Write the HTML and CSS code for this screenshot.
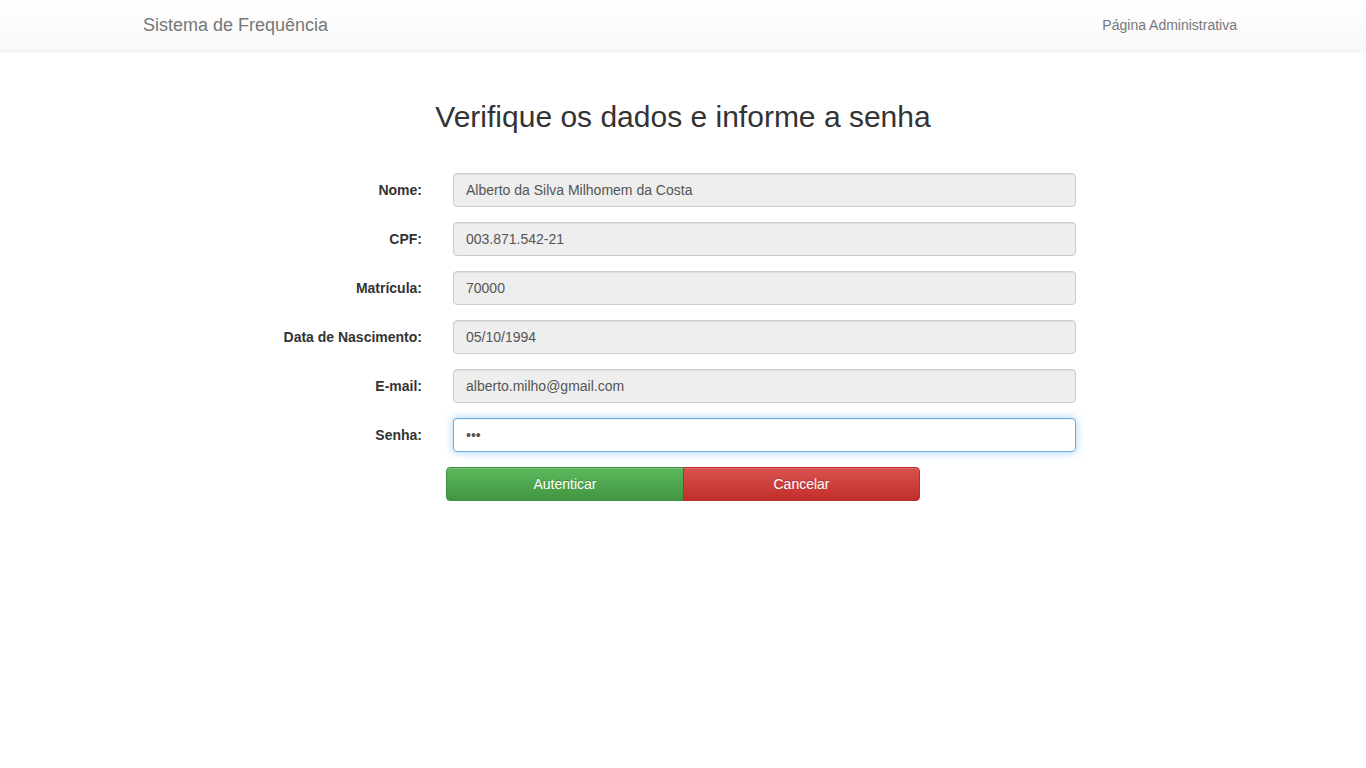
FILE: index.html
```html
<!DOCTYPE html>
<html lang="pt-BR">
<head>
<meta charset="utf-8">
<title>Sistema de Frequência</title>
<link rel="stylesheet" href="styles.css">
</head>
<body>
<nav class="navbar">
  <div class="navbar-inner">
    <a class="brand" href="#">Sistema de Frequência</a>
    <a class="nav-link" href="#">Página Administrativa</a>
  </div>
</nav>
<main class="main">
  <h2 class="title">Verifique os dados e informe a senha</h2>
  <form class="form">
    <label class="label">Nome:</label>
    <input class="input" type="text" value="Alberto da Silva Milhomem da Costa" readonly>
    <label class="label">CPF:</label>
    <input class="input" type="text" value="003.871.542-21" readonly>
    <label class="label">Matrícula:</label>
    <input class="input" type="text" value="70000" readonly>
    <label class="label">Data de Nascimento:</label>
    <input class="input" type="text" value="05/10/1994" readonly>
    <label class="label">E-mail:</label>
    <input class="input" type="text" value="alberto.milho@gmail.com" readonly>
    <label class="label">Senha:</label>
    <input class="input input-focus" type="password" value="abc">
    <div class="btn-row">
      <div class="btn-group">
        <button type="button" class="btn btn-success">Autenticar</button>
        <button type="button" class="btn btn-danger">Cancelar</button>
      </div>
    </div>
  </form>
</main>
</body>
</html>
```
FILE: styles.css
```css
* { box-sizing: border-box; }
html, body { margin: 0; padding: 0; }
body {
  font-family: "Liberation Sans", Arial, sans-serif;
  font-size: 14px;
  line-height: 1.42857;
  color: #333;
  background: #fff;
}
.navbar {
  height: 51px;
  background: linear-gradient(to bottom, #ffffff 0%, #f8f8f8 100%);
  border-bottom: 1px solid #f2f2f2;
  box-shadow: inset 0 1px 0 rgba(255,255,255,.15), 0 1px 5px rgba(0,0,0,.06);
}
.navbar-inner {
  width: 1140px;
  margin: 0 auto;
  padding: 0 16px 0 15px;
  height: 50px;
  display: flex;
  justify-content: space-between;
  align-items: stretch;
}
.brand {
  padding: 15px 15px;
  font-size: 18px;
  line-height: 20px;
  color: #777;
  text-decoration: none;
}
.nav-link {
  padding: 15px 0;
  line-height: 20px;
  font-size: 14px;
  color: #777;
  text-decoration: none;
}
.main {
  width: 1140px;
  margin: 0 auto;
}
.title {
  margin: 49px 0 40px;
  font-size: 30px;
  font-weight: 500;
  line-height: 33px;
  text-align: center;
  color: #333;
}
.form {
  display: grid;
  grid-template-columns: 309px 623px;
  column-gap: 31px;
  row-gap: 15px;
}
.label {
  text-align: right;
  font-weight: bold;
  padding-top: 7px;
  line-height: 20px;
}
.input {
  display: block;
  width: 100%;
  height: 34px;
  padding: 6px 12px;
  font-family: inherit;
  font-size: 14px;
  line-height: 20px;
  color: #555;
  background: #eee;
  border: 1px solid #ccc;
  border-radius: 4px;
  box-shadow: inset 0 1px 1px rgba(0,0,0,.075);
  outline: none;
}
.input-focus {
  background: #fff;
  border-color: #66afe9;
  box-shadow: inset 0 1px 1px rgba(0,0,0,.075), 0 0 8px rgba(102,175,233,.6);
}
.btn-row {
  grid-column: 1 / 3;
  display: flex;
  justify-content: flex-start;
  padding-left: 333px;
}
.btn-group {
  display: flex;
}
.btn {
  height: 34px;
  padding: 6px 12px;
  font-family: inherit;
  font-size: 14px;
  line-height: 20px;
  color: #fff;
  text-shadow: 0 -1px 0 rgba(0,0,0,.2);
  border: 1px solid transparent;
  cursor: pointer;
  box-shadow: inset 0 1px 0 rgba(255,255,255,.15), 0 1px 1px rgba(0,0,0,.075);
}
.btn-success {
  width: 238px;
  background: linear-gradient(to bottom, #5cb85c 0%, #419641 100%);
  border-color: #3e8f3e;
  border-radius: 4px 0 0 4px;
}
.btn-danger {
  width: 237px;
  background: linear-gradient(to bottom, #d9534f 0%, #c12e2a 100%);
  border-color: #b92c28;
  border-radius: 0 4px 4px 0;
  margin-left: -1px;
}
```
